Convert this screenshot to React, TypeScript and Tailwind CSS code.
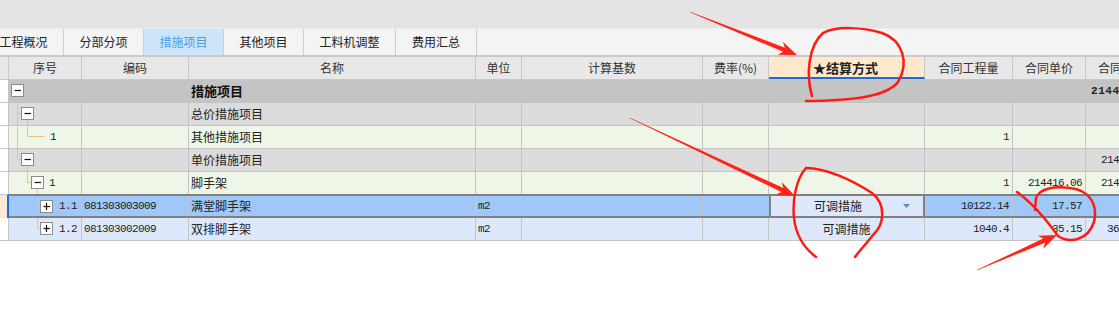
import React from "react";

// column widths (each includes its right border)
const W = {
  left: "w-[9px]",
  seq: "w-[73px]",
  code: "w-[107px]",
  name: "w-[287px]",
  unit: "w-[46px]",
  base: "w-[181px]",
  rate: "w-[66px]",
  method: "w-[156px]",
  qty: "w-[88px]",
  price: "w-[73px]",
  total: "w-[73px]",
};

const mono = "font-['Liberation_Mono',monospace] text-[11px] tracking-[-0.6px]";
const line = "#f3c27a";

type BoxProps = { x: number; y?: number; plus?: boolean };

const Box: React.FC<BoxProps> = ({ x, y = 4.5, plus }) => (
  <g>
    <rect x={x} y={y} width={12} height={12} fill="#fff" stroke="#8c8c8c" />
    <line x1={x + 3} y1={y + 6} x2={x + 9.5} y2={y + 6} stroke="#111" strokeWidth={1.2} />
    {plus && <line x1={x + 6} y1={y + 2.5} x2={x + 6} y2={y + 9.5} stroke="#111" strokeWidth={1.2} />}
  </g>
);

const Tree: React.FC<{ w: number; h?: number; children: React.ReactNode }> = ({ w, h = 22, children }) => (
  <svg width={w} height={h} className="shrink-0" viewBox={`0 0 ${w} ${h}`}>
    {children}
  </svg>
);

type Row = {
  bg: string;
  tree: React.ReactNode;
  code?: string;
  name: string;
  bold?: boolean;
  qty?: string;
  price?: string;
  total?: string;
};

const rows: Row[] = [
  {
    bg: "bg-[#c4c4c4]",
    bold: true,
    name: "措施项目",
    total: "214416.06",
    tree: (
      <Tree w={72}>
        <line x1={8.5} y1={17} x2={8.5} y2={22} stroke={line} />
        <Box x={2.5} />
      </Tree>
    ),
  },
  {
    bg: "bg-[#dcdcdc]",
    name: "总价措施项目",
    tree: (
      <Tree w={72}>
        <line x1={8.5} y1={0} x2={8.5} y2={22} stroke={line} />
        <line x1={8.5} y1={10.5} x2={12.5} y2={10.5} stroke={line} />
        <line x1={18.5} y1={17} x2={18.5} y2={22} stroke={line} />
        <Box x={12.5} />
      </Tree>
    ),
  },
  {
    bg: "bg-[#eef7e7]",
    name: "其他措施项目",
    qty: "1",
    tree: (
      <>
        <Tree w={41}>
          <line x1={8.5} y1={0} x2={8.5} y2={22} stroke={line} />
          <line x1={18.5} y1={0} x2={18.5} y2={10.5} stroke={line} />
          <line x1={18.5} y1={10.5} x2={35} y2={10.5} stroke={line} />
        </Tree>
        <span className={mono}>1</span>
      </>
    ),
  },
  {
    bg: "bg-[#dcdcdc]",
    name: "单价措施项目",
    total: "214416.06",
    tree: (
      <Tree w={72}>
        <line x1={8.5} y1={0} x2={8.5} y2={10.5} stroke={line} />
        <line x1={8.5} y1={10.5} x2={12.5} y2={10.5} stroke={line} />
        <line x1={18.5} y1={17} x2={18.5} y2={22} stroke={line} />
        <Box x={12.5} />
      </Tree>
    ),
  },
  {
    bg: "bg-[#eef7e7]",
    name: "脚手架",
    qty: "1",
    price: "214416.06",
    total: "214416.06",
    tree: (
      <>
        <Tree w={40}>
          <line x1={18.5} y1={0} x2={18.5} y2={10.5} stroke={line} />
          <line x1={18.5} y1={10.5} x2={22.5} y2={10.5} stroke={line} />
          <line x1={28.5} y1={17} x2={28.5} y2={22} stroke={line} />
          <Box x={22.5} />
        </Tree>
        <span className={mono}>1</span>
      </>
    ),
  },
];

const HeadCell: React.FC<{ w: string; children?: React.ReactNode; className?: string }> = ({ w, children, className = "" }) => (
  <div className={`${w} shrink-0 h-full flex items-center justify-center border-r border-[#c8c8c8] ${className}`}>{children}</div>
);

const Cell: React.FC<{ w: string; children?: React.ReactNode; className?: string }> = ({ w, children, className = "" }) => (
  <div className={`${w} shrink-0 h-full flex items-center border-r border-[#c4c4c4] overflow-hidden whitespace-nowrap ${className}`}>
    {children}
  </div>
);

function arrowPts(x1: number, y1: number, x2: number, y2: number, head = 18, hw = 7, sw = 2.2) {
  const dx = x2 - x1;
  const dy = y2 - y1;
  const len = Math.hypot(dx, dy);
  const ux = dx / len;
  const uy = dy / len;
  const nx = -uy;
  const ny = ux;
  const bx = x2 - ux * head;
  const by = y2 - uy * head;
  const p = (x: number, y: number, k: number) => `${x + nx * k},${y + ny * k}`;
  return [
    p(x1, y1, 0.2),
    p(bx + ux * 4, by + uy * 4, sw),
    p(bx, by, hw),
    `${x2},${y2}`,
    p(bx, by, -hw),
    p(bx + ux * 4, by + uy * 4, -sw),
    p(x1, y1, -0.2),
  ].join(" ");
}

const tabs = ["工程概况", "分部分项", "措施项目", "其他项目", "工料机调整", "费用汇总"];

export default function App() {
  return (
    <div className="relative w-[1119px] h-[310px] overflow-hidden bg-white text-[12px] text-[#222] font-['Noto_Sans_CJK_SC','Noto_Sans',sans-serif]">
      {/* title bar */}
      <div className="h-[29px] bg-[#e4e4e4] border-b border-[#ececec]" />

      {/* tabs */}
      <div className="h-[28px] flex bg-[#f4f4f4] border-b-2 border-[#c9c9c9] ml-[-16px]">
        {tabs.map((t, i) => (
          <div
            key={t}
            className={`h-full flex items-center justify-center border-r border-[#cfcfcf] ${i === 4 ? "w-[92px]" : i === 5 ? "w-[81px]" : "w-[80px]"} ${
              i === 2 ? "bg-[#cce5f9] text-[#4c9be6]" : "text-[#222]"
            }`}
          >
            {t}
          </div>
        ))}
      </div>

      {/* header */}
      <div className="h-[23px] flex bg-[#e8e8e8] border-b border-[#c8c8c8] text-[#333] whitespace-nowrap">
        <HeadCell w={W.left} />
        <HeadCell w={W.seq}>序号</HeadCell>
        <HeadCell w={W.code}>编码</HeadCell>
        <HeadCell w={W.name}>名称</HeadCell>
        <HeadCell w={W.unit}>单位</HeadCell>
        <HeadCell w={W.base}>计算基数</HeadCell>
        <HeadCell w={W.rate}>费率(%)</HeadCell>
        <HeadCell w={W.method} className="bg-[#ffe8cc] font-bold text-[13px] text-[#222] border-b-2 border-b-[#1a6be0] pt-[2px] pr-[2px]">
          ★结算方式
        </HeadCell>
        <HeadCell w={W.qty}>合同工程量</HeadCell>
        <HeadCell w={W.price}>合同单价</HeadCell>
        <HeadCell w={W.total}>合同合价</HeadCell>
      </div>

      {/* ordinary rows */}
      {rows.map((r, i) => (
        <div key={i} className={`flex ${i === 4 ? "h-[22px]" : "h-[23px] border-b border-[#c4c4c4]"}`}>
          <Cell w={W.left} className="bg-white" />
          <div className={`flex ${r.bg}`}>
            <Cell w={W.seq}>{r.tree}</Cell>
            <Cell w={W.code} className={`${mono} pl-[2px]`}>{r.code}</Cell>
            <Cell w={W.name} className={`pl-[2px] ${r.bold ? "font-bold text-[13px] text-[#111]" : ""}`}>{r.name}</Cell>
            <Cell w={W.unit} />
            <Cell w={W.base} />
            <Cell w={W.rate} />
            <Cell w={W.method} />
            <Cell w={W.qty} className={`${mono} justify-end pr-[3px]`}>{r.qty}</Cell>
            <Cell w={W.price} className={`${mono} justify-end pr-[3px]`}>{r.price}</Cell>
            <Cell w={W.total} className={`${mono} justify-end pr-[3px] ${r.bold ? "font-bold tracking-[0.5px]" : ""}`}>{r.total}</Cell>
          </div>
        </div>
      ))}

      {/* selected row */}
      <div className="flex h-[24px]">
        <div className="w-[9px] shrink-0 h-full bg-[#fde9d3] border-t border-[#c4c4c4] border-r-2 border-r-[#1c6ee8]" />
        <div className="flex h-full bg-[#9fc8f8] border-t-2 border-b-2 border-[#808080]">
          <Cell w={W.seq}>
            <Tree w={50} h={20}>
              <line x1={28.5} y1={0} x2={28.5} y2={20} stroke={line} />
              <line x1={28.5} y1={10.5} x2={31.5} y2={10.5} stroke={line} />
              <Box x={31.5} plus />
            </Tree>
            <span className={mono}>1.1</span>
          </Cell>
          <Cell w={W.code} className={`${mono} pl-[2px]`}>081303003009</Cell>
          <Cell w={W.name} className="pl-[2px]">满堂脚手架</Cell>
          <Cell w={W.unit} className={`${mono} pl-[2px]`}>m2</Cell>
          <Cell w={W.base} />
          <Cell w={W.rate} className="border-r-0" />
          <div className="w-[156px] shrink-0 h-full flex items-center bg-[#dde9fb] border-l-2 border-r-2 border-[#808080]">
            <span className="flex-1 text-center pl-[6px]">可调措施</span>
            <svg width="24" height="10" viewBox="0 0 24 10" className="shrink-0">
              <path d="M4 3 L11 3 L7.5 7 Z" fill="#5a8fcc" />
            </svg>
          </div>
          <Cell w={W.qty} className={`${mono} justify-end pr-[3px]`}>10122.14</Cell>
          <Cell w={W.price} className={`${mono} justify-end pr-[3px]`}>17.57</Cell>
          <Cell w={W.total} className={`${mono} justify-end pr-[3px]`} />
        </div>
      </div>

      {/* last row */}
      <div className="flex h-[23px] border-b border-[#c4c4c4]">
        <Cell w={W.left} className="bg-white" />
        <div className="flex bg-[#dde9fb]">
          <Cell w={W.seq}>
            <Tree w={50}>
              <line x1={28.5} y1={0} x2={28.5} y2={10.5} stroke={line} />
              <line x1={28.5} y1={10.5} x2={31.5} y2={10.5} stroke={line} />
              <Box x={31.5} plus />
            </Tree>
            <span className={mono}>1.2</span>
          </Cell>
          <Cell w={W.code} className={`${mono} pl-[2px]`}>081303002009</Cell>
          <Cell w={W.name} className="pl-[2px]">双排脚手架</Cell>
          <Cell w={W.unit} className={`${mono} pl-[2px]`}>m2</Cell>
          <Cell w={W.base} />
          <Cell w={W.rate} />
          <Cell w={W.method} className="justify-center">可调措施</Cell>
          <Cell w={W.qty} className={`${mono} justify-end pr-[3px]`}>1040.4</Cell>
          <Cell w={W.price} className={`${mono} justify-end pr-[3px]`}>35.15</Cell>
          <Cell w={W.total} className={`${mono} justify-end pr-[3px]`}>36556.02</Cell>
        </div>
      </div>

      {/* red hand-drawn annotations */}
      <svg className="absolute inset-0 pointer-events-none" width="1119" height="310" viewBox="0 0 1119 310">
        <polygon points={arrowPts(690, 12, 797, 55)} fill="#ff2418" />
        <polygon points={arrowPts(630, 118, 795, 196)} fill="#ff2418" />
        <polygon points={arrowPts(977, 270, 1057, 235)} fill="#ff2418" />
        <g fill="none" stroke="#ff1a14" strokeWidth={2.5} strokeLinecap="round" strokeLinejoin="round">
          <path d="M806 101 C840 101 885 99 898 82 C910 62 902 40 882 33 C862 27 836 26 823 33 C808 46 806 76 812 96" />
          <path d="M806 168 C826 168 852 180 872 193 C886 204 885 224 873 235 C867 243 860 250 855 257 M806 168 C797 178 792 198 794 218 C796 236 804 248 816 257" />
          <path d="M1017 192 C1035 205 1048 222 1058 236 C1070 244 1088 240 1094 222 C1098 205 1090 190 1070 188 C1055 186 1040 188 1036 198 L1035 210" />
        </g>
      </svg>
    </div>
  );
}
